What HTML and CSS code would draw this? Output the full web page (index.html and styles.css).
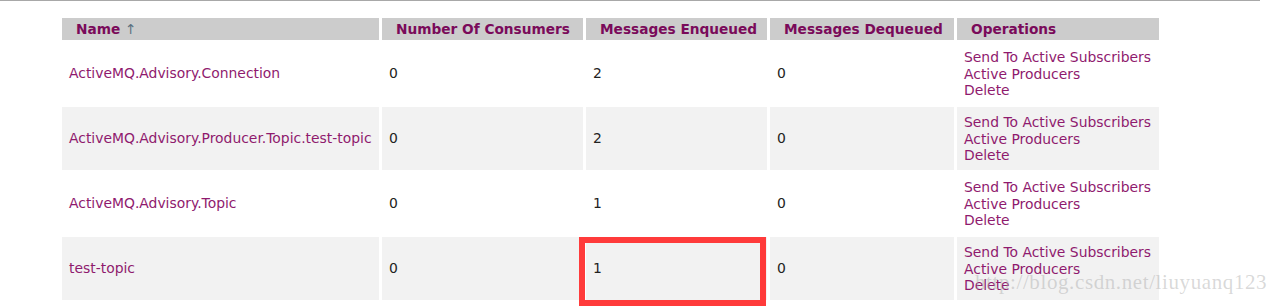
FILE: index.html
```html
<!DOCTYPE html>
<html>
<head>
<meta charset="utf-8">
<link rel="stylesheet" href="styles.css">
</head>
<body>
<div class="topline"></div>
<div class="page">
<table class="topics">
  <colgroup>
    <col class="c-name"><col class="c-cons"><col class="c-enq"><col class="c-deq"><col class="c-ops">
  </colgroup>
  <thead>
    <tr>
      <th>Name <span class="arrow">↑</span></th>
      <th>Number Of Consumers</th>
      <th>Messages Enqueued</th>
      <th>Messages Dequeued</th>
      <th>Operations</th>
    </tr>
  </thead>
  <tbody>
    <tr>
      <td><a href="#">ActiveMQ.Advisory.Connection</a></td>
      <td>0</td>
      <td>2</td>
      <td>0</td>
      <td class="ops"><a href="#">Send To Active Subscribers</a><br><a href="#">Active Producers</a><br><a href="#">Delete</a></td>
    </tr>
    <tr class="alt">
      <td><a href="#">ActiveMQ.Advisory.Producer.Topic.test-topic</a></td>
      <td>0</td>
      <td>2</td>
      <td>0</td>
      <td class="ops"><a href="#">Send To Active Subscribers</a><br><a href="#">Active Producers</a><br><a href="#">Delete</a></td>
    </tr>
    <tr>
      <td><a href="#">ActiveMQ.Advisory.Topic</a></td>
      <td>0</td>
      <td>1</td>
      <td>0</td>
      <td class="ops"><a href="#">Send To Active Subscribers</a><br><a href="#">Active Producers</a><br><a href="#">Delete</a></td>
    </tr>
    <tr class="alt">
      <td><a href="#">test-topic</a></td>
      <td>0</td>
      <td class="marked">1<span class="redbox"></span></td>
      <td>0</td>
      <td class="ops"><a href="#">Send To Active Subscribers</a><br><a href="#">Active Producers</a><br><a href="#">Delete</a><span class="watermark">http://blog.csdn.net/liuyuanq123</span></td>
    </tr>
  </tbody>
</table>
</div>
</body>
</html>
```
FILE: styles.css
```css
html, body {
  margin: 0;
  padding: 0;
  background: #ffffff;
  overflow: hidden;
}
body {
  width: 1280px;
  height: 307px;
  font-family: "DejaVu Sans", Verdana, sans-serif;
  font-size: 13.9px;
  color: #222222;
}
.topline {
  width: 1260px;
  height: 1px;
  background: #a8a8a8;
}
.page {
  padding: 15px 0 0 59px;
}
.topics {
  border-collapse: separate;
  border-spacing: 3px 2px;
  table-layout: fixed;
  width: 1103px;
}
.c-name { width: 317px; }
.c-cons { width: 201px; }
.c-enq { width: 181px; }
.c-deq { width: 184px; }
.c-ops { width: 202px; }
.topics th {
  background: #cccccc;
  color: #7a0a5a;
  font-weight: bold;
  text-align: left;
  height: 22px;
  padding: 0 0 0 14px;
  font-size: 13.7px;
  line-height: 22px;
  white-space: nowrap;
  overflow: hidden;
}
.arrow {
  color: #5a7080;
  font-weight: normal;
}
.topics td {
  height: 62px;
  padding: 0 0 0 7px;
  vertical-align: middle;
  line-height: 16.5px;
  white-space: nowrap;
  overflow: visible;
}
.topics tr.alt td {
  background: #f2f2f2;
}
.topics a {
  color: #8f1a6e;
  text-decoration: none;
}
.topics td.ops {
  padding-top: 1px;
}
.marked {
  position: relative;
}
.redbox {
  position: absolute;
  left: -7px;
  top: 0;
  width: 175px;
  height: 57px;
  border: 6.5px solid #ff3b3b;
}
.ops {
  position: relative;
}
.watermark {
  position: absolute;
  left: 18px;
  top: 37px;
  font-family: "Liberation Serif", "Times New Roman", serif;
  font-size: 21px;
  letter-spacing: 0.6px;
  color: rgba(170, 170, 170, 0.45);
  white-space: nowrap;
  pointer-events: none;
}
```
